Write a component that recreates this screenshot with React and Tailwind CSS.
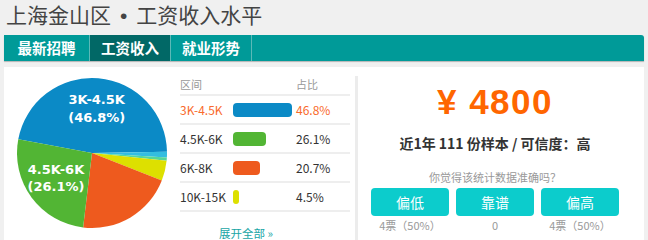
import React from 'react';

const rows = [
  { label: '3K-4.5K', pct: '46.8%', w: 59, color: '#0b8ac6', active: true },
  { label: '4.5K-6K', pct: '26.1%', w: 33, color: '#52b534' },
  { label: '6K-8K', pct: '20.7%', w: 27, color: '#ee5a1e' },
  { label: '10K-15K', pct: '4.5%', w: 6, color: '#dde000' },
];

const slices = [
  { a0: 190.6, a1: 359.1, color: '#0b8ac6' },
  { a0: 359.1, a1: 363.4, color: '#33bde0' },
  { a0: 363.4, a1: 365.9, color: '#55d69a' },
  { a0: 365.9, a1: 381.5, color: '#dde000' },
  { a0: 381.5, a1: 456.8, color: '#ee5a1e' },
  { a0: 456.8, a1: 550.6, color: '#52b534' },
];

function arc(cx, cy, r, a0, a1) {
  const t0 = (a0 * Math.PI) / 180;
  const t1 = (a1 * Math.PI) / 180;
  const x0 = cx + r * Math.cos(t0);
  const y0 = cy + r * Math.sin(t0);
  const x1 = cx + r * Math.cos(t1);
  const y1 = cy + r * Math.sin(t1);
  const large = a1 - a0 > 180 ? 1 : 0;
  return `M${cx},${cy} L${x0},${y0} A${r},${r} 0 ${large} 1 ${x1},${y1} Z`;
}

function Pie() {
  return (
    <svg width="160" height="160" viewBox="0 0 160 160">
      {slices.map((s, i) => (
        <path key={i} d={arc(80, 80, 75, s.a0, s.a1)} fill={s.color} />
      ))}
      <g fill="#ffffff" fontFamily="'DejaVu Sans', sans-serif" fontWeight="bold" fontSize="13" textAnchor="middle">
        <text x="84.7" y="31">3K-4.5K</text>
        <text x="84.7" y="49">(46.8%)</text>
        <text x="44" y="101">4.5K-6K</text>
        <text x="44" y="118">(26.1%)</text>
      </g>
    </svg>
  );
}

export default function App() {
  return (
    <div className="w-[648px] h-[240px] overflow-hidden bg-[#f0f0f0] font-['Noto_Sans_CJK_SC',sans-serif]">
      <div className="h-[35px] pl-[6px] text-[21px] leading-[28px] text-[#444] font-['Noto_Sans_CJK_SC',serif]">
        上海金山区<span className="font-['Liberation_Sans',sans-serif] px-[9px]">•</span>工资收入水平
      </div>
      <div className="mx-[4px] h-[26px] bg-[#009a98] rounded-tr-[3px] flex shadow-[0_1px_1px_rgba(0,0,0,0.25)]">
        <div className="w-[86px] border-r border-[#5cb9b7] flex items-center justify-center text-white font-bold text-[14.5px]">最新招聘</div>
        <div className="w-[81px] border-r border-[#5cb9b7] bg-[#016866] flex items-center justify-center text-white font-bold text-[14.5px]">工资收入</div>
        <div className="w-[81px] border-r border-[#5cb9b7] flex items-center justify-center text-white font-bold text-[14.5px]">就业形势</div>
      </div>
      <div className="mx-[4px] mt-[6px] h-[173px] bg-white flex">
        <div className="w-[176px] shrink-0 pl-[8px] pt-[6px]">
          <Pie />
        </div>
        <div className="w-[170px] shrink-0">
          <div className="h-[29px] pt-[8px] border-b-2 border-[#eeeeee] flex text-[11px] leading-[18px] text-[#999]">
            <div className="w-[116px]">区间</div>
            <div>占比</div>
          </div>
          {rows.map((r) => (
            <div key={r.label} className={`h-[29px] border-b-2 border-[#eeeeee] flex items-center text-[12px] ${r.active ? 'text-[#f96a2c]' : 'text-[#333]'}`}>
              <div className="w-[53px]">{r.label}</div>
              <div className="w-[63px]">
                <div className="h-[14px] rounded-[4px]" style={{ width: r.w, background: r.color }} />
              </div>
              <div>{r.pct}</div>
            </div>
          ))}
          <div className="pl-[39px] mt-[13px] text-[11.5px] leading-[16px] text-[#18a5a5]">展开全部 »</div>
        </div>
        <div className="ml-[5px] mt-[9px] w-[3px] bg-[#ececec]" />
        <div className="flex-1 pr-[12px] flex flex-col items-center">
          <div className="mt-[15px] h-[40px] leading-[40px] text-[35px] font-bold tracking-[1.5px] text-[#ff6600] font-['Liberation_Sans',sans-serif]">¥ 4800</div>
          <div className="mt-[11px] h-[20px] leading-[20px] text-[14px] font-bold text-[#333]">近1年 111 份样本 / 可信度：高</div>
          <div className="mt-[16px] h-[16px] leading-[16px] text-[11px] text-[#999]">你觉得该统计数据准确吗？</div>
          <div className="mt-[3px] flex gap-[7px]">
            {[['偏低', '4票（50%）'], ['靠谱', '0'], ['偏高', '4票（50%）']].map(([b, v]) => (
              <div key={b} className="w-[78px] flex flex-col items-center">
                <div className="w-[78px] h-[28px] rounded-[4px] bg-[#0ccccc] text-white text-[14px] flex items-center justify-center">{b}</div>
                <div className="mt-[2px] h-[14px] leading-[14px] text-[11px] text-[#999]">{v}</div>
              </div>
            ))}
          </div>
        </div>
      </div>
    </div>
  );
}
